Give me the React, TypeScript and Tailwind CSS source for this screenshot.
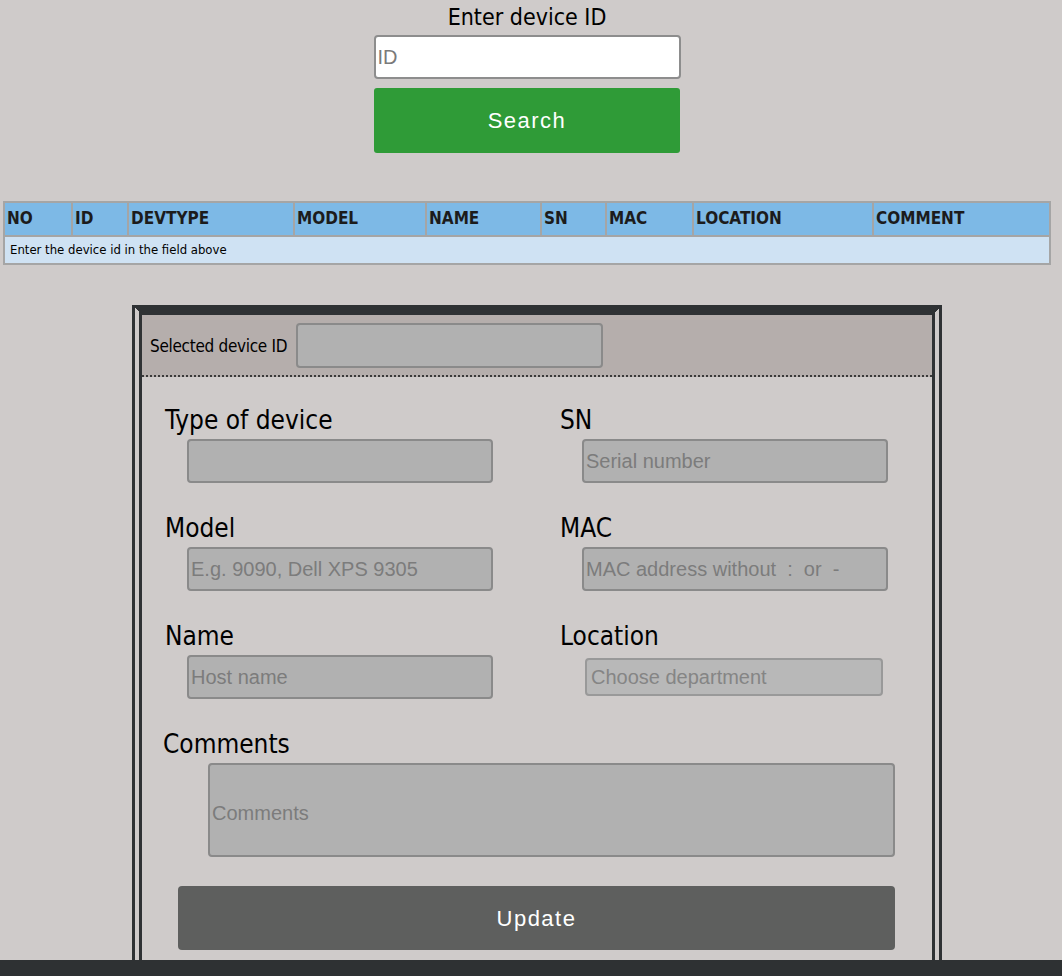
import React from 'react';

// --- Fuentes ---
const cond = { fontFamily: '"Liberation Sans Narrow", "DejaVu Sans Condensed", "Roboto", sans-serif' };
const arial = { fontFamily: '"Liberation Sans", Arial, sans-serif' };

const columns = [
  { key: 'NO', w: 'w-[68px]' },
  { key: 'ID', w: 'w-[56px]' },
  { key: 'DEVTYPE', w: 'w-[166px]' },
  { key: 'MODEL', w: 'w-[132px]' },
  { key: 'NAME', w: 'w-[115px]' },
  { key: 'SN', w: 'w-[65px]' },
  { key: 'MAC', w: 'w-[87px]' },
  { key: 'LOCATION', w: 'w-[180px]' },
  { key: 'COMMENT', w: 'w-auto' },
];

const inputCls =
  'h-[44px] w-[306px] ml-[22px] rounded-[4px] border-2 border-[#8a8a8a] bg-[#b1b1b1] px-[2px] text-[20px] text-[#333] placeholder:text-[#7c7c7c] outline-none';

function Field({ label, placeholder }: { label: string; placeholder?: string }) {
  return (
    <div className="flex flex-col pl-[23px]">
      <label className="h-[34px] mb-[2px] text-[26px] leading-[34px] text-black" style={cond}>
        {label}
      </label>
      <input className={inputCls} style={arial} placeholder={placeholder} />
    </div>
  );
}

export default function App() {
  return (
    <div className="relative h-[976px] w-full bg-[#cfcbca] overflow-hidden">
      {/* --- Buscador --- */}
      <div className="flex flex-col items-center pr-[8px]">
        <h2 className="h-[35px] pt-[2px] text-[23px] leading-[30px] text-black" style={cond}>
          Enter device ID
        </h2>
        <input
          className="h-[44px] w-[307px] rounded-[4px] border-2 border-[#8d8d8d] bg-white px-[2px] text-[20px] placeholder:text-[#7a7a7a] outline-none"
          style={arial}
          placeholder="ID"
        />
        <button
          className="mt-[9px] h-[65px] w-[306px] rounded-[3px] bg-[#2f9b37] text-[22px] tracking-[1.5px] text-white"
          style={arial}
        >
          Search
        </button>
      </div>

      {/* --- Tabla --- */}
      <div className="mt-[48px] px-[3px] pr-[11px]">
        <table className="w-full table-fixed border-collapse border-2 border-[#a5a5a5]" style={cond}>
          <thead>
            <tr className="h-[34px] bg-[#7db9e6]">
              {columns.map((c) => (
                <th
                  key={c.key}
                  className={`${c.w} border-2 border-[#a5a5a5] px-[2px] text-left text-[17px] font-bold text-[#1c1c1c]`}
                >
                  {c.key}
                </th>
              ))}
            </tr>
          </thead>
          <tbody>
            <tr className="h-[28px] bg-[#cfe2f3]">
              <td colSpan={9} className="px-[5px] text-[13px] text-black">
                Enter the device id in the field above
              </td>
            </tr>
          </tbody>
        </table>
      </div>

      {/* --- Panel de edición --- */}
      <div className="mt-[40px] ml-[132px] w-[810px] border-x-[10px] border-t-[10px] border-x-[#2f3234] border-t-[#2f3234] [border-left-style:double] [border-right-style:double] pb-[30px]">
        <div className="flex h-[62px] items-center gap-[9px] border-b-2 border-dotted border-[#3a3a3a] bg-[#b5aeac] pl-[8px]">
          <span className="pt-[3px] text-[17px] tracking-[-0.3px] text-black" style={cond}>
            Selected device ID
          </span>
          <input className="h-[45px] w-[307px] rounded-[4px] border-2 border-[#8a8a8a] bg-[#b1b1b1] outline-none" />
        </div>

        <div className="grid grid-cols-2 gap-y-[28px] pt-[26px]">
          <Field label="Type of device" />
          <Field label="SN" placeholder="Serial number" />
          <Field label="Model" placeholder="E.g. 9090, Dell XPS 9305" />
          <Field label="MAC" placeholder="MAC address without  :  or  -" />
          <Field label="Name" placeholder="Host name" />
          <div className="flex flex-col pl-[23px]">
            <label className="h-[34px] mb-[2px] text-[26px] leading-[34px] text-black" style={cond}>
              Location
            </label>
            <select
              className="mt-[3px] ml-[25px] h-[38px] w-[298px] appearance-none rounded-[4px] border-2 border-[#999] bg-[#b8b8b8] px-[4px] text-[20px] text-[#858585] outline-none"
              style={arial}
              defaultValue=""
            >
              <option value="">Choose department</option>
            </select>
          </div>
        </div>

        <div className="mt-[28px] flex flex-col pl-[21px]">
          <label className="h-[34px] mb-[2px] text-[26px] leading-[34px] text-black" style={cond}>
            Comments
          </label>
          <textarea
            className="ml-[45px] h-[94px] w-[687px] resize-none rounded-[4px] border-2 border-[#8a8a8a] bg-[#b1b1b1] px-[2px] pt-[33px] text-[20px] placeholder:text-[#7c7c7c] outline-none"
            style={arial}
            placeholder="Comments"
          />
        </div>

        <button
          className="mt-[29px] ml-[36px] h-[64px] w-[717px] rounded-[4px] bg-[#5e5f5e] text-[22px] tracking-[1.5px] text-white"
          style={arial}
        >
          Update
        </button>
      </div>

      {/* --- Pie --- */}
      <div className="absolute bottom-0 left-0 h-[16px] w-full bg-[#2e3133]" />
    </div>
  );
}
